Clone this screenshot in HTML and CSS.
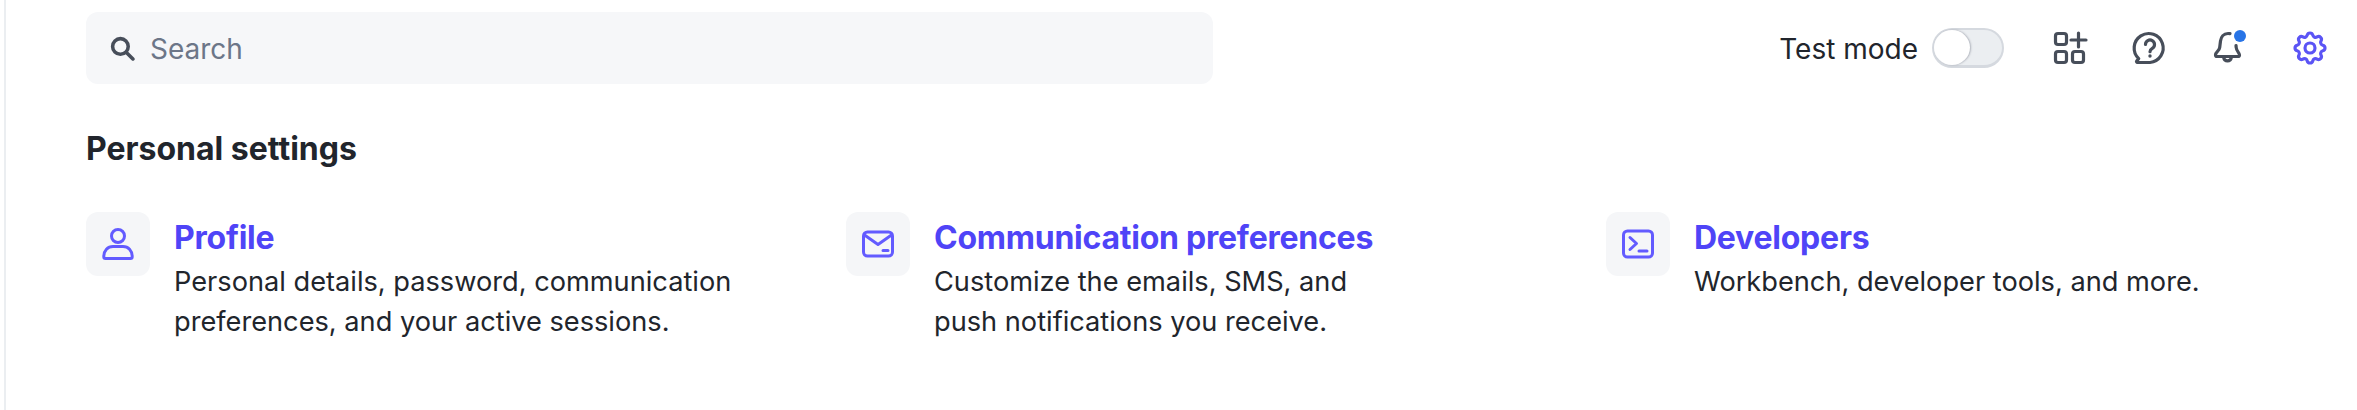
FILE: index.html
```html
<!DOCTYPE html>
<html lang="en">
<head>
    <meta charset="UTF-8">
    <title>Settings</title>
    <link rel="stylesheet" href="styles.css">
</head>
<body>
    <div class="page">
        <header class="topbar">
            <div class="search">
                <svg class="search-icon" viewBox="0 0 24 24"><circle cx="10" cy="10" r="7.5"/><path d="M15.5 15.5L22 22"/></svg>
                <span class="search-text">Search</span>
            </div>
            <div class="actions">
                <span class="test-label">Test mode</span>
                <span class="toggle"><span class="knob"></span></span>
                <svg class="icon first" viewBox="0 0 32 32"><rect x="1.5" y="1.5" width="11" height="11" rx="2.5"/><rect x="1.5" y="19.5" width="11" height="11" rx="2.5"/><rect x="18.5" y="19.5" width="11" height="11" rx="2.5"/><path d="M24.5 1v14M17 8h15"/></svg>
                <svg class="icon" viewBox="0 0 32 32"><path d="M16 30.5H3.5c-.9 0-1.3-1-.8-1.6l2-2.3A14.5 14.5 0 1 1 16 30.5z"/><path d="M11.5 12.5a4.5 4.5 0 1 1 6.8 3.9c-1.4.8-2.3 1.7-2.3 3.3"/><circle class="fill" cx="16" cy="24" r="1.7"/></svg>
                <svg class="icon" viewBox="0 0 32 32"><path d="M16 1.6c-.7-.1-1.3-.1-2-.1C9.5 1.5 7 5 6.5 9l-.8 6.5C5.2 19.5 1.5 20 1.5 23c0 1 .7 1.5 1.5 1.5h21c1 0 1.5-.6 1.500-1.500 0-2.500-3-3.500-3.300-7.500l-.2-2"/><path d="M9.500 25a4.100 5 0 0 0 8 0"/><circle class="dot" cx="26" cy="4" r="6"/></svg>
                <svg class="icon gear" viewBox="2.4 2.4 19.2 19.2"><path d="M10.325 4.317c.426-1.756 2.924-1.756 3.35 0a1.724 1.724 0 0 0 2.573 1.066c1.543-.94 3.31.826 2.37 2.37a1.724 1.724 0 0 0 1.065 2.572c1.756.426 1.756 2.924 0 3.35a1.724 1.724 0 0 0-1.066 2.573c.94 1.543-.826 3.31-2.37 2.37a1.724 1.724 0 0 0-2.572 1.065c-.426 1.756-2.924 1.756-3.35 0a1.724 1.724 0 0 0-2.573-1.066c-1.543.94-3.31-.826-2.37-2.37a1.724 1.724 0 0 0-1.065-2.572c-1.756-.426-1.756-2.924 0-3.35a1.724 1.724 0 0 0 1.066-2.573c-.94-1.543.826-3.31 2.37-2.37 1 .608 2.296.07 2.572-1.065z"/><circle cx="12" cy="12" r="3"/></svg>
            </div>
        </header>

        <h2 class="section-title">Personal settings</h2>

        <div class="cards">
            <div class="card">
                <div class="tile">
                    <svg viewBox="0 0 32 32"><circle cx="16" cy="8" r="6.5"/><path d="M3.5 30.5h25c1 0 1.7-.7 1.7-1.7 0-6.3-4-10.3-9.2-10.3H11C5.8 18.5 1.8 22.5 1.8 28.8c0 1 .7 1.7 1.7 1.7z"/></svg>
                </div>
                <div class="card-text">
                    <a class="card-title">Profile</a>
                    <p>Personal details, password, communication<br>preferences, and your active sessions.</p>
                </div>
            </div>
            <div class="card">
                <div class="tile">
                    <svg viewBox="0 0 32 32"><rect x="1.5" y="4" width="29" height="24" rx="4"/><path d="M2.5 7L16 16.500 29.500 7M21 22.500h5"/></svg>
                </div>
                <div class="card-text">
                    <a class="card-title">Communication preferences</a>
                    <p>Customize the emails, SMS, and<br>push notifications you receive.</p>
                </div>
            </div>
            <div class="card">
                <div class="tile">
                    <svg viewBox="0 0 32 32"><rect x="1.5" y="3" width="29" height="26" rx="4"/><path d="M8 9.500l6.500 6L8 21.500M17 23h8"/></svg>
                </div>
                <div class="card-text">
                    <a class="card-title">Developers</a>
                    <p>Workbench, developer tools, and more.</p>
                </div>
            </div>
        </div>
    </div>
</body>
</html>
```

FILE: styles.css
```css
body {
    margin: 0;
    background-color: #fff;
    color: #21252c;
    font-family: Inter, "Noto Sans", sans-serif;
}

.page {
    margin-left: 4px;
    border-left: 2px solid #ebeef1;
    padding: 12px 31px 0 80px;
    height: 398px;
    overflow: hidden;
}

.topbar {
    display: flex;
    justify-content: space-between;
    align-items: center;
}

.search {
    width: 1127px;
    height: 72px;
    background-color: #f6f7f9;
    border-radius: 12px;
    display: flex;
    align-items: center;
    gap: 15px;
    padding-left: 24px;
    box-sizing: border-box;
    font-size: 28px;
    color: #6c7688;
}

.search-text {
    padding-top: 2px;
}

.search-icon {
    width: 25px;
    height: 25px;
    fill: none;
    stroke: #474e5a;
    stroke-width: 3.4;
    stroke-linecap: round;
}

.actions {
    display: flex;
    align-items: center;
}

.test-label {
    font-size: 28px;
    margin-right: 14px;
    padding-top: 1px;
}

.toggle {
    display: block;
    width: 72px;
    height: 40px;
    box-sizing: border-box;
    background-color: #ebeef1;
    border: 2px solid #d5d9df;
    border-bottom-width: 3px;
    border-radius: 20px;
}

.knob {
    display: block;
    width: 36px;
    height: 35px;
    background-color: #fff;
    border-radius: 50%;
    box-shadow: 1px 0 2px rgba(60, 66, 87, 0.35);
}

.icon {
    width: 32px;
    height: 32px;
    margin-left: 48px;
    fill: none;
    stroke: #474e5a;
    stroke-width: 3.2;
    stroke-linecap: round;
    stroke-linejoin: round;
    overflow: visible;
}

.icon.first {
    margin-left: 50px;
}

.icon .fill {
    fill: #474e5a;
    stroke: none;
}

.icon .dot {
    fill: #2874e6;
    stroke: none;
}

.icon.gear {
    stroke: #5b54f5;
    stroke-width: 1.9;
}

.section-title {
    margin: 45px 0 0;
    font-size: 32px;
    line-height: 40px;
    font-weight: 650;
}

.cards {
    display: grid;
    grid-template-columns: repeat(3, 760px);
    margin-top: 43px;
}

.card {
    display: flex;
    gap: 24px;
}

.tile {
    width: 64px;
    height: 64px;
    flex-shrink: 0;
    background-color: #f5f6f8;
    border-radius: 12px;
    display: flex;
    align-items: center;
    justify-content: center;
}

.tile svg {
    width: 32px;
    height: 32px;
    fill: none;
    stroke: #635bff;
    stroke-width: 3;
    stroke-linecap: round;
    stroke-linejoin: round;
}

.card-text {
    padding-top: 2px;
}

.card-title {
    display: block;
    font-size: 32px;
    line-height: 48px;
    font-weight: 650;
    letter-spacing: -0.24px;
    color: #4f44f7;
}

.card-text p {
    margin: 0;
    font-size: 27.2px;
    line-height: 40px;
}
```
